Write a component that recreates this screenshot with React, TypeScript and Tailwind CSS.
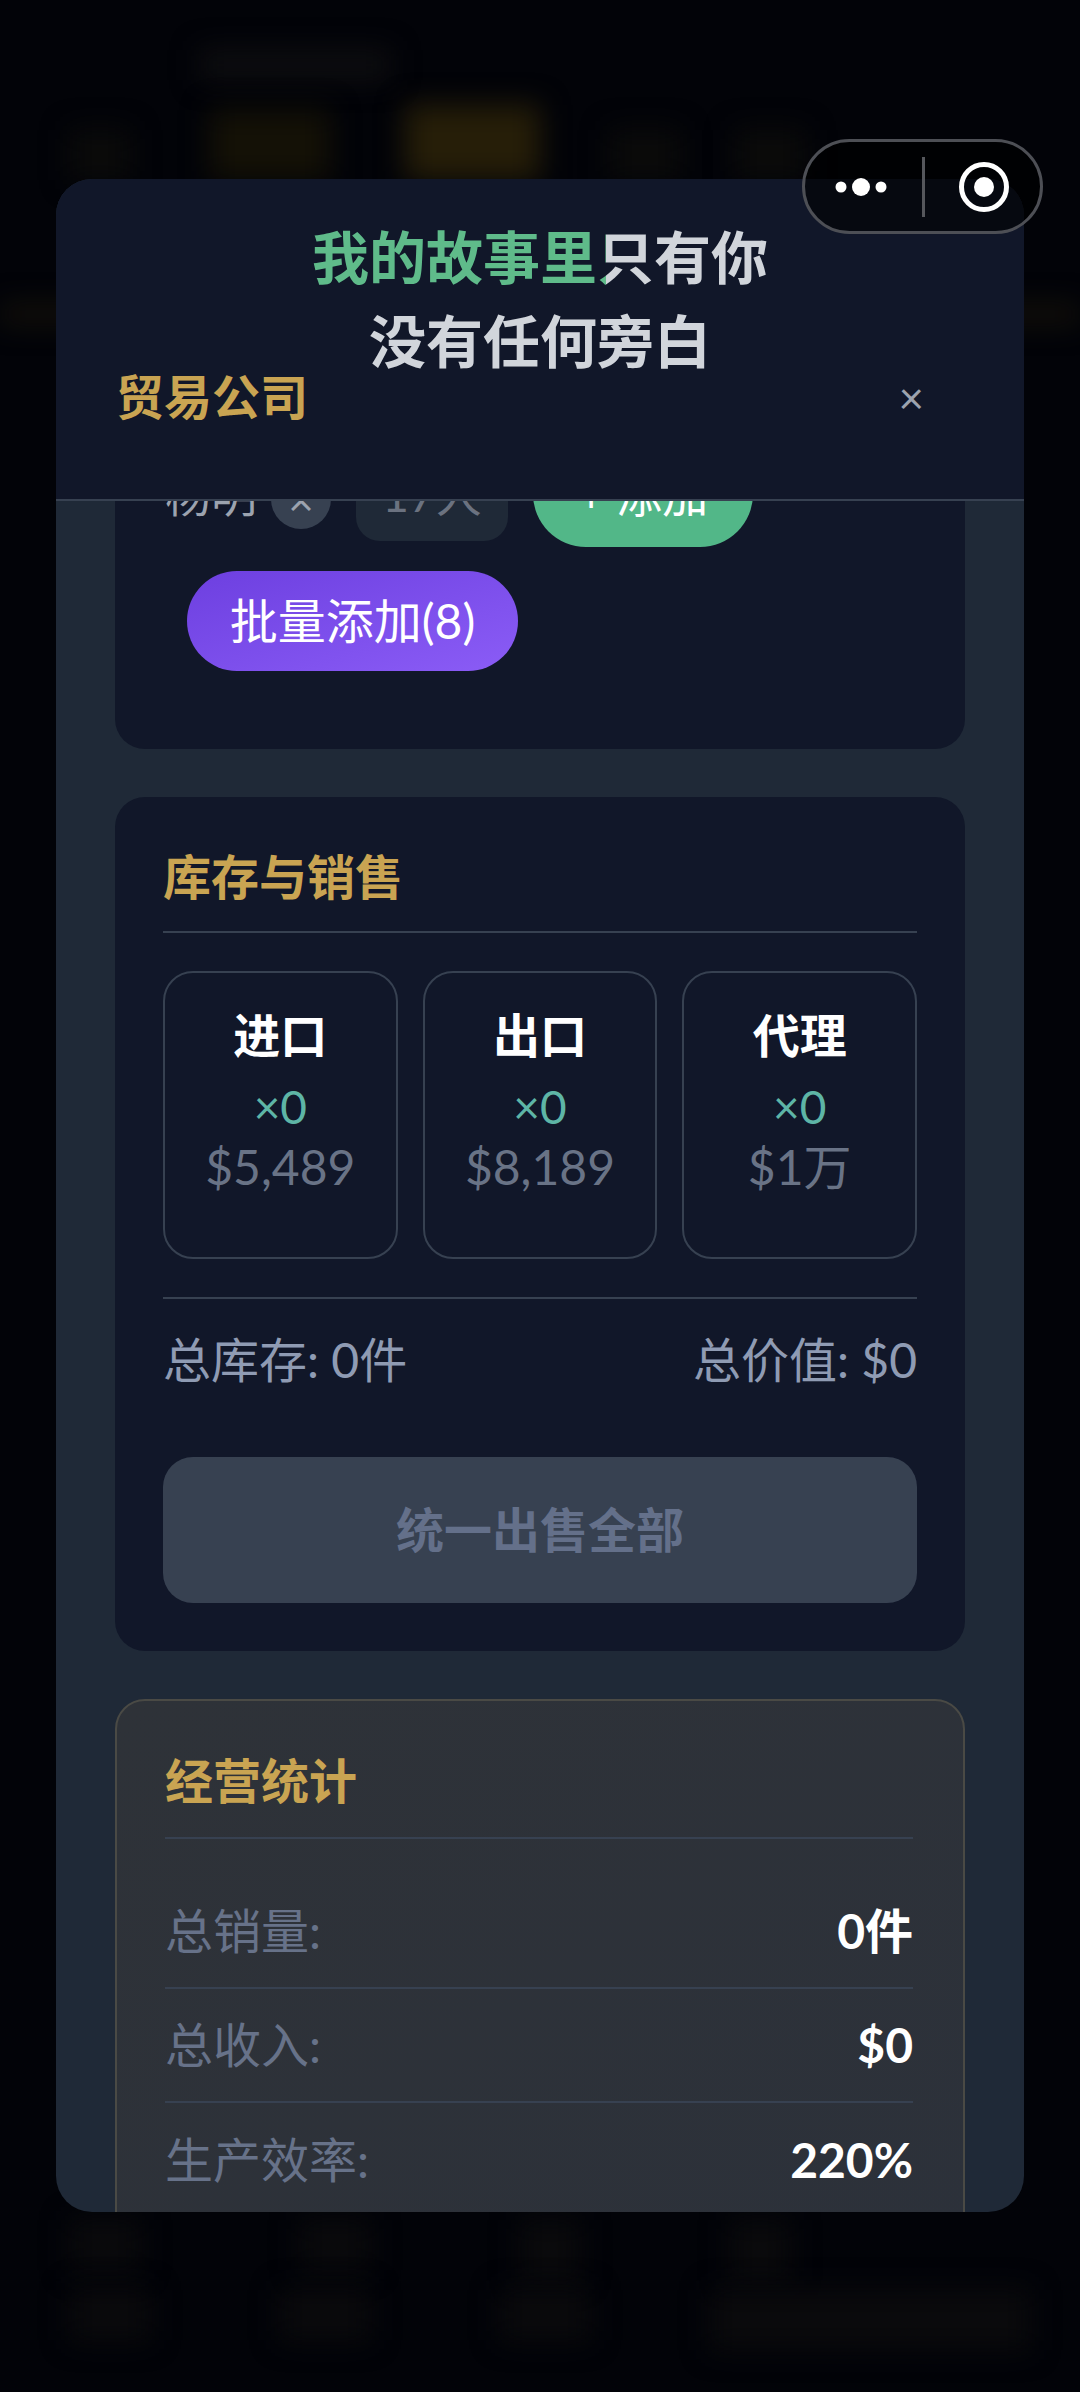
import React from "react";

const font = "font-['Lato','Noto_Sans_CJK_SC',sans-serif]";

// stock cards in the sales panel
const stock = [
	{ name: "进口", count: "×0", price: "$5,489" },
	{ name: "出口", count: "×0", price: "$8,189" },
	{ name: "代理", count: "×0", price: "$1万" },
];

const stats = [
	{ label: "总销量:", value: "0件" },
	{ label: "总收入:", value: "$0" },
	{ label: "生产效率:", value: "220%" },
];

// blurred game page behind the dialog
const backdrop = [
	"left-[200px] top-[50px] w-[190px] h-[30px] bg-[#0e0e10]",
	"left-[70px] top-[130px] w-[60px] h-[50px] bg-[#0b0b0a]",
	"left-[210px] top-[110px] w-[120px] h-[70px] bg-[#141106]",
	"left-[405px] top-[105px] w-[135px] h-[75px] bg-[#261e08]",
	"left-[610px] top-[130px] w-[70px] h-[50px] bg-[#0b0b0a]",
	"left-[735px] top-[130px] w-[70px] h-[50px] bg-[#0b0b0a]",
	"left-[0px] top-[305px] w-[1080px] h-[18px] bg-[#15120a]",
	"left-[70px] top-[2220px] w-[70px] h-[50px] bg-[#0a0a0c]",
	"left-[300px] top-[2220px] w-[70px] h-[50px] bg-[#0a0a0c]",
	"left-[520px] top-[2220px] w-[60px] h-[60px] bg-[#0a0a0c]",
	"left-[730px] top-[2220px] w-[60px] h-[60px] bg-[#0a0a0c]",
	"left-[70px] top-[2290px] w-[80px] h-[50px] bg-[#0a0a0c]",
	"left-[280px] top-[2290px] w-[90px] h-[50px] bg-[#0a0a0c]",
	"left-[500px] top-[2290px] w-[90px] h-[50px] bg-[#0a0a0c]",
	"left-[710px] top-[2290px] w-[320px] h-[60px] bg-[#0a0a0c]",
];

const App: React.FC = () => {
	return (
		<div className={`relative w-[1080px] h-[2392px] overflow-hidden bg-[#020308] pt-[179px] px-[56px] ${font}`}>
			{backdrop.map((cls) => (
				<div key={cls} className={`absolute blur-[14px] ${cls}`} />
			))}

			{/* Dialog */}
			<div className="relative flex flex-col w-[968px] h-[2033px] rounded-[36px] overflow-hidden bg-[#1f2937]">
				{/* Header */}
				<div className="z-10 flex items-center justify-between shrink-0 h-[322px] pt-[116px] pl-[60px] pr-[100px] bg-[#111729] border-b-[2px] border-[#374151]">
					<h2 className="text-[48px] leading-[64px] font-bold text-[#c9a452]">贸易公司</h2>
					<span className="text-[44px] leading-[44px] text-[#9ca3af]">×</span>
				</div>

				<div className="flex flex-col gap-[48px] px-[59px] -mt-[60px]">
					{/* Add member panel, scrolled under the header */}
					<div className="rounded-[30px] bg-[#111729] pl-[50px] pr-[48px] pb-[78px]">
						<div className="flex items-center gap-[25px] h-[106px]">
							<span className="text-[46px] text-[#9ca3af]">杨明</span>
							<span className="flex items-center justify-center w-[60px] h-[60px] mt-[10px] -ml-[11px] rounded-full bg-[#374151] text-[44px] text-[#9ca3af]">×</span>
							<span className="flex items-center justify-center w-[152px] h-[94px] rounded-[24px] bg-[#1f2937] text-[46px] text-[#6b7280]">17人</span>
							<span className="flex items-center justify-center w-[220px] h-[106px] rounded-full bg-[#52b788] text-[46px] text-white">+ 添加</span>
						</div>
						<button className="flex items-center justify-center w-[331px] h-[100px] mt-[24px] ml-[22px] rounded-[50px] bg-gradient-to-br from-[#6d3fe0] to-[#8b5cf6] text-[48px] text-white">
							批量添加(8)
						</button>
					</div>

					{/* Stock and sales */}
					<div className="h-[854px] rounded-[30px] bg-[#111729] px-[48px] pt-[48px]">
						<h3 className="h-[88px] pb-[24px] border-b-[2px] border-[#374151] text-[48px] leading-[64px] font-bold text-[#c9a452]">库存与销售</h3>
						<div className="grid grid-cols-3 gap-[25px] mt-[38px]">
							{stock.map((item) => (
								<div key={item.name} className="flex flex-col items-center h-[288px] pt-[30px] rounded-[30px] border-[2px] border-[#374151]">
									<span className="text-[47px] leading-[64px] font-bold text-white">{item.name}</span>
									<span className="mt-[8px] text-[46px] leading-[64px] text-[#5eb5a6]">{item.count}</span>
									<span className="text-[48px] leading-[56px] font-normal text-[#697386]">{item.price}</span>
								</div>
							))}
						</div>
						<div className="flex items-center justify-between h-[124px] mt-[38px] border-t-[2px] border-[#374151] text-[48px] text-[#8f9bb3]">
							<span>总库存: 0件</span>
							<span>总价值: $0</span>
						</div>
						<button className="flex items-center justify-center w-full h-[146px] mt-[36px] rounded-[30px] bg-[#374151] text-[48px] font-bold text-[#64708a]">
							统一出售全部
						</button>
					</div>

					{/* Business stats */}
					<div className="rounded-[30px] border-[2px] border-[#4a4a45] bg-gradient-to-br from-[#2e3238] to-[#2c313a] pl-[48px] pr-[50px] pt-[48px] pb-[60px]">
						<h3 className="h-[90px] pb-[20px] border-b-[2px] border-[#374151] text-[48px] leading-[64px] font-bold text-[#c9a452]">经营统计</h3>
						<div className="mt-[36px]">
							{stats.map((row) => (
								<div key={row.label} className="flex items-center justify-between h-[114px] border-b-[2px] border-[#374151] last:border-b-0">
									<span className="text-[48px] text-[#677289]">{row.label}</span>
									<span className="text-[48px] font-bold text-white">{row.value}</span>
								</div>
							))}
						</div>
					</div>
				</div>
			</div>

			{/* Lyrics overlay */}
			<div className="absolute z-20 left-0 top-[215px] w-[1080px] text-center text-[57px] leading-[84px] font-bold text-[#d1d5db]">
				<p>
					<span className="text-[#5fbb8a]">我的故事里</span>
					<span className="bg-[linear-gradient(90deg,#5fbb8a_16%,#d1d5db_16%)] bg-clip-text text-transparent">只</span>有你
				</p>
				<p>没有任何旁白</p>
			</div>

			{/* Mini program capsule */}
			<div className="absolute z-20 left-[802px] top-[139px] flex items-center w-[241px] h-[95px] rounded-full border-[3px] border-[#4d4f55] bg-[#000000]/60">
				<svg width="235" height="89" viewBox="0 0 235 89" fill="none">
					<circle cx="36" cy="45" r="5.5" fill="#fff" />
					<circle cx="56" cy="45" r="9" fill="#fff" />
					<circle cx="76" cy="45" r="5.5" fill="#fff" />
					<rect x="117" y="15" width="3" height="60" fill="#55575c" />
					<circle cx="179" cy="45" r="22.5" stroke="#fff" strokeWidth="5" />
					<circle cx="179" cy="45" r="10" fill="#fff" />
				</svg>
			</div>
		</div>
	);
};

export default App;
